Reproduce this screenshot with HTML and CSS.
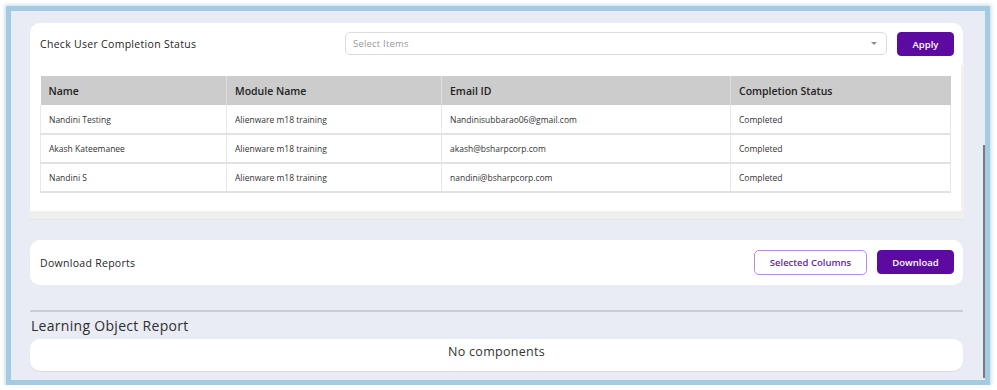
FILE: index.html
```html
<!DOCTYPE html>
<html>
<head>
<meta charset="utf-8">
<link rel="stylesheet" href="styles.css">
</head>
<body>
<div class="frame">
  <div class="inner">
    <section class="card card-status">
      <div class="status-head">
        <div class="title">Check User Completion Status</div>
        <div class="select">
          <span class="placeholder">Select Items</span>
          <span class="caret"></span>
        </div>
        <button class="btn btn-primary btn-apply">Apply</button>
      </div>
      <div class="scroll">
        <div class="scroll-body">
          <table class="grid">
            <thead>
              <tr><th class="c1">Name</th><th class="c2">Module Name</th><th class="c3">Email ID</th><th class="c4">Completion Status</th></tr>
            </thead>
            <tbody>
              <tr><td>Nandini Testing</td><td>Alienware m18 training</td><td>Nandinisubbarao06@gmail.com</td><td>Completed</td></tr>
              <tr><td>Akash Kateemanee</td><td>Alienware m18 training</td><td>akash@bsharpcorp.com</td><td>Completed</td></tr>
              <tr><td>Nandini S</td><td>Alienware m18 training</td><td>nandini@bsharpcorp.com</td><td>Completed</td></tr>
            </tbody>
          </table>
        </div>
        <div class="vtrack"></div>
        <div class="htrack"></div>
      </div>
    </section>

    <section class="card card-download">
      <div class="title">Download Reports</div>
      <div class="actions">
        <button class="btn btn-outline">Selected Columns</button>
        <button class="btn btn-primary btn-download">Download</button>
      </div>
    </section>

    <hr class="divider">
    <h2 class="lo-title">Learning Object Report</h2>
    <section class="card card-empty">No components</section>
  </div>
  <div class="thumb"></div>
</div>
</body>
</html>
```

FILE: styles.css
```css
* { box-sizing: border-box; }
html, body { margin: 0; padding: 0; background: #ffffff; }
body {
  font-family: "Open Sans", "DejaVu Sans", sans-serif;
  color: #2b2b2b;
}
.frame {
  position: relative;
  margin: 6px 6px 0 6px;
  width: 984px;
  height: 379px;
  border: 5px solid #a3cbe2;
  box-shadow: 0 0 4px 1px rgba(140, 185, 215, 0.55);
  background: #e9ecf4;
}
.inner {
  padding: 12px 22px 0 19px;
  display: flex;
  flex-direction: column;
}
.card {
  background: #ffffff;
  border-radius: 10px;
}
.card-status {
  border-radius: 10px 10px 0 0;
  display: flex;
  flex-direction: column;
}
.status-head {
  display: flex;
  align-items: center;
  height: 42px;
  padding: 0 9px 0 10px;
}
.title {
  font-size: 10.5px;
  font-weight: 500;
  color: #262626;
  letter-spacing: 0.3px;
}
.status-head .title { flex: 1; margin-top: -1px; }
.select {
  width: 542px;
  height: 23px;
  border: 1px solid #dcdcdc;
  border-radius: 5px;
  display: flex;
  align-items: center;
  justify-content: space-between;
  padding: 0 7px 0 7px;
  margin-right: 10px;
  margin-top: -1px;
}
.placeholder { font-size: 9.5px; color: #9a9a9a; padding-bottom: 1px; letter-spacing: 0.2px; }
.caret {
  width: 0; height: 0;
  border-left: 3.5px solid transparent;
  border-right: 3.5px solid transparent;
  border-top: 3.5px solid #8c8c8c;
  margin-right: 2px;
}
.btn {
  font-family: inherit;
  font-size: 9.5px;
  font-weight: 600;
  border-radius: 4px;
  cursor: pointer;
}
.btn-primary {
  background: #5d0aa0;
  border: 1px solid #5d0aa0;
  color: #ffffff;
}
.btn-apply { width: 57px; height: 24px; }
.scroll {
  display: grid;
  grid-template-columns: 1fr 3px;
  grid-template-rows: 146px 9px;
}
.scroll-body { padding: 11px 10px 0 10px; }
.vtrack { background: #f1f1f3; }
.htrack { grid-column: 1 / 3; background: #efeff0; border-bottom: 1px solid #e2e3e6; }
.grid {
  width: 910px;
  border-collapse: collapse;
  table-layout: fixed;
}
.grid th {
  background: #cccccc;
  height: 29px;
  text-align: left;
  font-size: 10.5px;
  font-weight: 600;
  color: #222;
  padding: 0 8px;
  border-left: 1px solid #dedede;
}
.grid th:first-child { border-left: none; }
.grid .c1 { width: 186px; }
.grid .c2 { width: 215px; }
.grid .c3 { width: 289px; }
.grid .c4 { width: 220px; }
.grid td {
  height: 29px;
  font-size: 8.5px;
  color: #333;
  padding: 0 8px;
  border-left: 1px solid #e7e8ea;
  border-bottom: 2px solid #e1e2e4;
}
.grid td:last-child { border-right: 1px solid #e7e8ea; }
.card-download {
  margin-top: 20px;
  height: 45px;
  display: flex;
  align-items: center;
  justify-content: space-between;
  padding: 0 9px 0 10px;
}
.actions { display: flex; gap: 10px; }
.btn-outline {
  width: 113px;
  height: 25px;
  background: #fff;
  border: 1px solid #b98be0;
  color: #6a1fa6;
  border-radius: 5px;
}
.btn-download { width: 77px; height: 24px; }
.divider {
  margin: 25px 0 0 0;
  border: none;
  height: 2px;
  background: #cbcdd2;
}
.lo-title {
  margin: 2px 0 0 1px;
  font-size: 14px;
  font-weight: 400;
  color: #2e2e2e;
  letter-spacing: 0.3px;
  height: 25px;
  line-height: 23px;
}
.card-empty {
  height: 32px;
  text-align: center;
  font-size: 12.5px;
  letter-spacing: 0.3px;
  color: #333;
  padding-top: 4px;
  box-shadow: 0 1px 0 #d9dbe0;
}
.thumb {
  position: absolute;
  right: 0;
  top: 134px;
  bottom: 2px;
  width: 2px;
  background: #7a7a7a;
}
```
